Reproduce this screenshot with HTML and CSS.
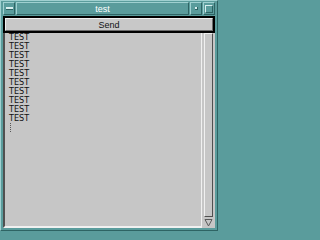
FILE: index.html
```html
<!DOCTYPE html>
<html>
<head>
<meta charset="utf-8">
<link rel="stylesheet" href="styles.css">
</head>
<body>
<div class="win">
  <div class="titlebar">
    <div class="tbtn"><span class="bar"></span></div>
    <div class="title">test</div>
    <div class="tbtn"><span class="dot"></span></div>
    <div class="tbtn"><span class="sq"></span></div>
  </div>
  <div class="client">
    <div class="sendwrap"><button class="send">Send</button></div>
    <div class="textrow">
      <div class="text">
        <div>TEST</div><div>TEST</div><div>TEST</div><div>TEST</div><div>TEST</div>
        <div>TEST</div><div>TEST</div><div>TEST</div><div>TEST</div><div>TEST</div>
        <div class="caret"></div>
      </div>
      <div class="scroll">
        <div class="trough"><div class="thumb"></div></div>
        <div class="arrow"><svg width="9" height="9" viewBox="0 0 9 9"><path d="M1 1.5 L8 1.5 L4.5 8 Z" fill="none" stroke="#5a5a5a" stroke-width="1"/></svg></div>
      </div>
    </div>
  </div>
</div>
</body>
</html>
```
FILE: styles.css
```css
html, body { margin: 0; padding: 0; background: #5a9c9c; }
.win {
  width: 218px; height: 231px; box-sizing: border-box;
  background: #5a9c9c;
  border-top: 1px solid #9fd0d0; border-left: 1px solid #9fd0d0;
  border-right: 1px solid #2e6464; border-bottom: 1px solid #2e6464;
  padding: 1px 2px 2px 2px;
  display: flex; flex-direction: column;
}
.titlebar { height: 13px; display: flex; align-items: stretch; gap: 1px; }
.tbtn {
  width: 12px; box-sizing: border-box;
  border-top: 1px solid #9fd0d0; border-left: 1px solid #9fd0d0;
  border-right: 1px solid #2e6464; border-bottom: 1px solid #2e6464;
  display: flex; align-items: center; justify-content: center;
}
.title {
  flex: 1; color: #fff; font-family: "Liberation Sans", sans-serif; font-size: 9px;
  display: flex; align-items: center; justify-content: center;
  border-top: 1px solid #9fd0d0; border-left: 1px solid #9fd0d0;
  border-right: 1px solid #2e6464; border-bottom: 1px solid #2e6464;
}
.bar { width: 7px; height: 2px; background: #d8eeee; border-bottom: 1px solid #2e6464; }
.dot { width: 2px; height: 2px; background: #d8eeee; border-right: 1px solid #2e6464; border-bottom: 1px solid #2e6464; }
.sq { width: 6px; height: 6px; border: 1px solid #d8eeee; border-right-color: #2e6464; border-bottom-color: #2e6464; }
.client { flex: 1; display: flex; flex-direction: column; background: #c6c6c6; margin-top: 1px; }
.sendwrap { border: 2px solid #000; }
.send {
  display: block; width: 100%; height: 13px; box-sizing: border-box;
  background: #c8c8c8; color: #111; font-family: "Liberation Sans", sans-serif; font-size: 9px;
  border: 1px solid; border-color: #f0f0f0 #6c6c6c #6c6c6c #f0f0f0; padding: 0; margin: 0;
}
.textrow { flex: 1; display: flex; }
.text {
  flex: 1; box-sizing: border-box; background: #c6c6c6;
  border-left: 2px solid #505050; border-bottom: 2px solid #f0f0f0;
  padding: 0 0 0 4px; font-family: "Liberation Sans Narrow", "DejaVu Sans Condensed", sans-serif; font-stretch: condensed;
  font-size: 9px; line-height: 9px; color: #111;
}
.text > div { height: 9px; overflow: visible; }
.caret { width: 1px; height: 9px; margin-left: 1px; border-left: 1px dotted #555; }
.scroll { width: 13px; display: flex; flex-direction: column; background: #c6c6c6; border-left: 1px solid #f0f0f0; }
.trough { flex: 1; padding: 0 2px; }
.thumb { height: 100%; box-sizing: border-box; border: 1px solid; border-color: #f0f0f0 #505050 #505050 #f0f0f0; }
.arrow { height: 11px; display: flex; align-items: center; justify-content: center; }
```
